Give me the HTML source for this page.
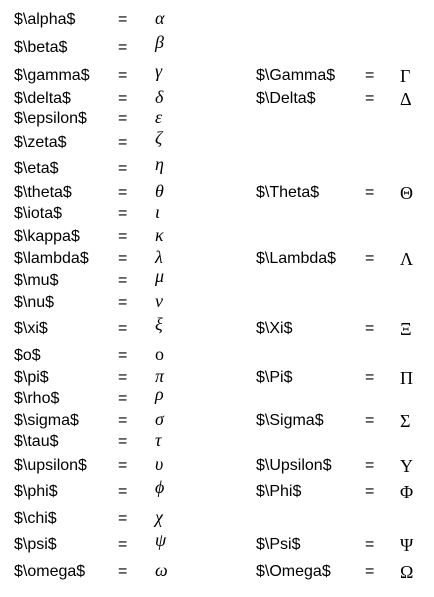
<html><head><style>
body{margin:0;width:434px;height:597px;background:#fff;position:relative;font-family:"Liberation Sans",sans-serif;font-size:16px;color:#000}
.r{position:absolute;left:0;width:434px;height:18px;line-height:18px}
.r span{position:absolute;white-space:nowrap}
.a{left:14px}.e{left:118px}.s{left:155px;font-family:"Liberation Serif","DejaVu Serif",serif;font-style:italic;font-size:18px;top:-2px}
.b{left:256px}.f{left:365px}.t{left:400px;font-family:"Liberation Serif","DejaVu Serif",serif;font-size:18px}
</style></head><body>
<div class="r" style="top:11px"><span class="a">$\alpha$</span><span class="e">=</span><span class="s">α</span></div>
<div class="r" style="top:39px"><span class="a">$\beta$</span><span class="e">=</span><span class="s" style="top:-6px">β</span></div>
<div class="r" style="top:67px"><span class="a">$\gamma$</span><span class="e">=</span><span class="s" style="top:-5px">γ</span><span class="b">$\Gamma$</span><span class="f">=</span><span class="t">Γ</span></div>
<div class="r" style="top:90px"><span class="a">$\delta$</span><span class="e">=</span><span class="s">δ</span><span class="b">$\Delta$</span><span class="f">=</span><span class="t">Δ</span></div>
<div class="r" style="top:110px"><span class="a">$\epsilon$</span><span class="e">=</span><span class="s">ε</span></div>
<div class="r" style="top:134px"><span class="a">$\zeta$</span><span class="e">=</span><span class="s" style="top:-5px">ζ</span></div>
<div class="r" style="top:160px"><span class="a">$\eta$</span><span class="e">=</span><span class="s" style="top:-5px">η</span></div>
<div class="r" style="top:184px"><span class="a">$\theta$</span><span class="e">=</span><span class="s">θ</span><span class="b">$\Theta$</span><span class="f">=</span><span class="t">Θ</span></div>
<div class="r" style="top:205px"><span class="a">$\iota$</span><span class="e">=</span><span class="s">ι</span></div>
<div class="r" style="top:228px"><span class="a">$\kappa$</span><span class="e">=</span><span class="s">κ</span></div>
<div class="r" style="top:250px"><span class="a">$\lambda$</span><span class="e">=</span><span class="s">λ</span><span class="b">$\Lambda$</span><span class="f">=</span><span class="t">Λ</span></div>
<div class="r" style="top:272px"><span class="a">$\mu$</span><span class="e">=</span><span class="s" style="top:-5px">μ</span></div>
<div class="r" style="top:294px"><span class="a">$\nu$</span><span class="e">=</span><span class="s">ν</span></div>
<div class="r" style="top:320px"><span class="a">$\xi$</span><span class="e">=</span><span class="s" style="top:-5px">ξ</span><span class="b">$\Xi$</span><span class="f">=</span><span class="t">Ξ</span></div>
<div class="r" style="top:347px"><span class="a">$o$</span><span class="e">=</span><span class="s" style="font-style:normal">o</span></div>
<div class="r" style="top:369px"><span class="a">$\pi$</span><span class="e">=</span><span class="s">π</span><span class="b">$\Pi$</span><span class="f">=</span><span class="t">Π</span></div>
<div class="r" style="top:390px"><span class="a">$\rho$</span><span class="e">=</span><span class="s" style="top:-5px">ρ</span></div>
<div class="r" style="top:412px"><span class="a">$\sigma$</span><span class="e">=</span><span class="s">σ</span><span class="b">$\Sigma$</span><span class="f">=</span><span class="t">Σ</span></div>
<div class="r" style="top:433px"><span class="a">$\tau$</span><span class="e">=</span><span class="s">τ</span></div>
<div class="r" style="top:457px"><span class="a">$\upsilon$</span><span class="e">=</span><span class="s">υ</span><span class="b">$\Upsilon$</span><span class="f">=</span><span class="t">Υ</span></div>
<div class="r" style="top:483px"><span class="a">$\phi$</span><span class="e">=</span><span class="s" style="top:-5px">ϕ</span><span class="b">$\Phi$</span><span class="f">=</span><span class="t">Φ</span></div>
<div class="r" style="top:510px"><span class="a">$\chi$</span><span class="e">=</span><span class="s">χ</span></div>
<div class="r" style="top:536px"><span class="a">$\psi$</span><span class="e">=</span><span class="s" style="top:-5px">ψ</span><span class="b">$\Psi$</span><span class="f">=</span><span class="t">Ψ</span></div>
<div class="r" style="top:563px"><span class="a">$\omega$</span><span class="e">=</span><span class="s">ω</span><span class="b">$\Omega$</span><span class="f">=</span><span class="t">Ω</span></div>
</body></html>
